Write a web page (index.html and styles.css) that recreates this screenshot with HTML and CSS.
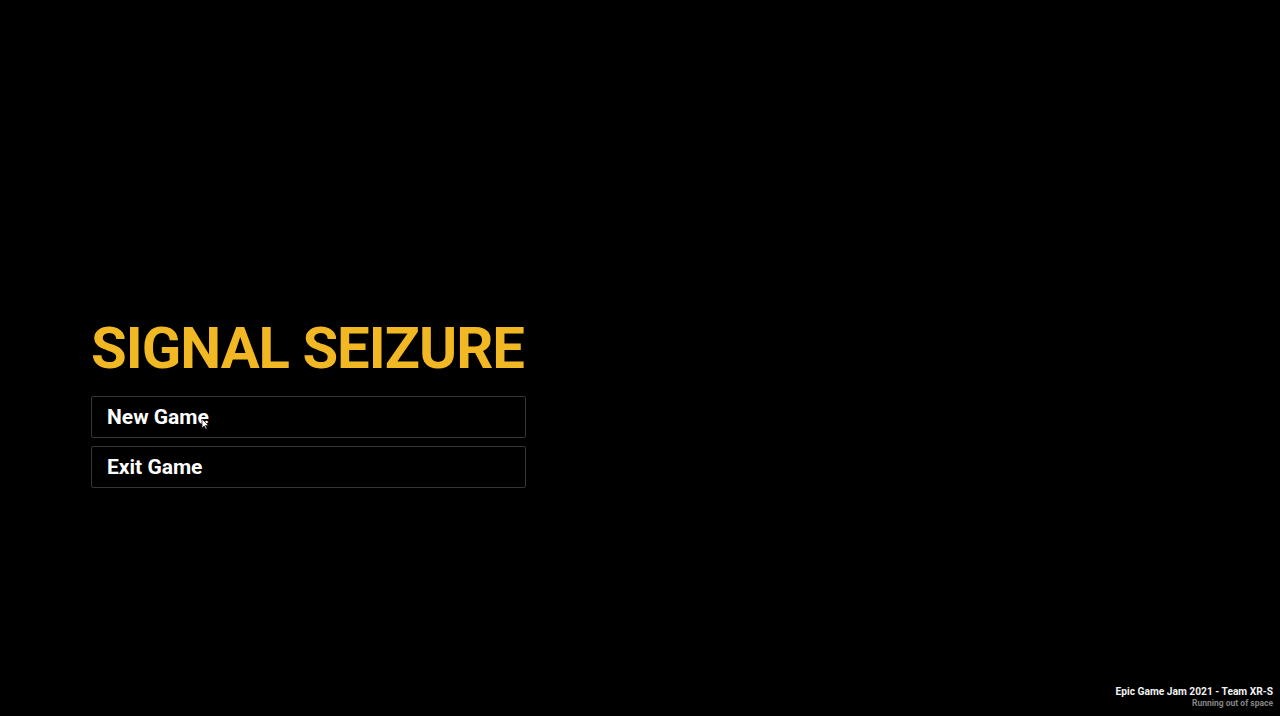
FILE: index.html
```html
<!DOCTYPE html>
<html>
<head>
<meta charset="utf-8">
<link rel="stylesheet" href="styles.css">
</head>
<body>
<div class="screen">
  <main class="menu">
    <h1 class="title">SIGNAL SEIZURE</h1>
    <div class="buttons">
      <div class="btn hover">New Game
        <svg class="cursor" width="9" height="12" viewBox="0 0 9 12"><path d="M1 1 L1 10 L3.2 8 L4.8 11.2 L6 10.6 L4.5 7.5 L7.5 7.5 Z" fill="#fff" stroke="#222" stroke-width="0.8"/></svg>
      </div>
      <div class="btn">Exit Game</div>
    </div>
  </main>
  <footer class="credits">
    <div class="jam">Epic Game Jam 2021 - Team XR-S</div>
    <div class="tag">Running out of space</div>
  </footer>
</div>
</body>
</html>
```
FILE: styles.css
```css
html, body {
  margin: 0;
  padding: 0;
  background: #000;
}
.screen {
  width: 1280px;
  height: 716px;
  position: relative;
  display: flex;
  flex-direction: column;
  justify-content: space-between;
  font-family: Roboto, "Liberation Sans", sans-serif;
  overflow: hidden;
}
.menu {
  padding-top: 314px;
  padding-left: 91px;
  width: 435px;
}
.title {
  margin: 0;
  color: #f2b824;
  font-weight: 700;
  font-size: 58px;
  line-height: 68px;
  letter-spacing: -1px;
  white-space: nowrap;
}
.buttons {
  margin-top: 14px;
  display: flex;
  flex-direction: column;
  gap: 8px;
}
.btn {
  position: relative;
  height: 40px;
  border: 1px solid #363636;
  border-radius: 2px;
  box-sizing: content-box;
  color: #fff;
  font-weight: 700;
  font-size: 21px;
  line-height: 40px;
  padding-left: 15px;
}
.cursor {
  position: absolute;
  left: 109px;
  top: 21px;
}
.credits {
  align-self: flex-end;
  text-align: right;
  padding: 0 7px 7px 0;
}
.jam {
  color: #f2f2f2;
  font-weight: 700;
  font-size: 10.2px;
  line-height: 12px;
}
.tag {
  color: #858585;
  font-weight: 700;
  font-size: 8.5px;
  line-height: 11px;
}
```
